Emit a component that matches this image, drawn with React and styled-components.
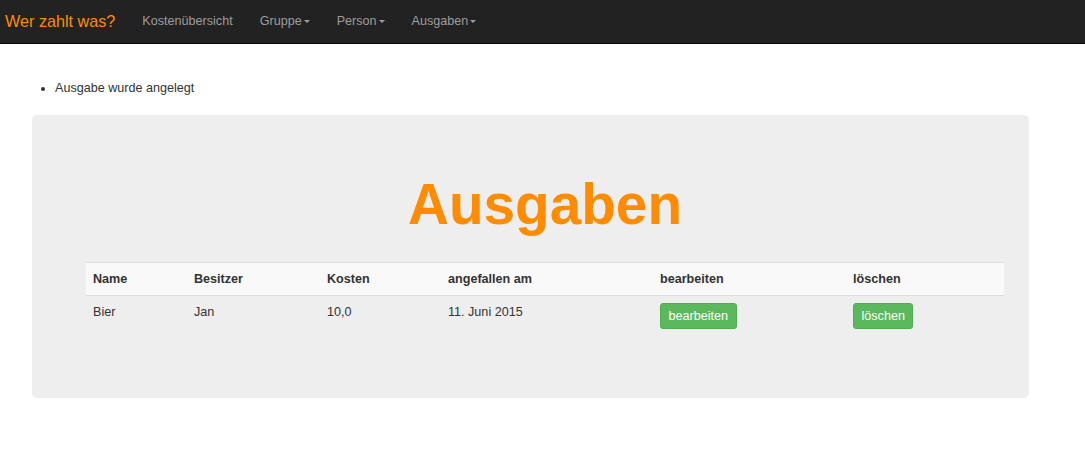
import React from 'react';
import styled, { createGlobalStyle } from 'styled-components';

const GlobalStyle = createGlobalStyle`
    html, body {
        margin: 0;
        padding: 0;
        background: #ffffff;
        font-family: "Liberation Sans", Arial, Helvetica, sans-serif;
        font-size: 12.6px;
        line-height: 18px;
        color: #333333;
    }
`;

const Navbar = styled.nav`
    display: flex;
    align-items: center;
    height: 43px;
    background: #222222;
    border-bottom: 1px solid #080808;
`;

const Brand = styled.a`
    padding: 0 13.5px 0 5px;
    font-size: 16.2px;
    line-height: 43px;
    color: #ff8c00;
    text-decoration: none;
`;

const NavList = styled.ul`
    display: flex;
    margin: 0;
    padding: 0;
    list-style: none;
`;

const NavLink = styled.a`
    display: flex;
    align-items: center;
    padding: 0 13.5px;
    line-height: 43px;
    color: #9d9d9d;
    text-decoration: none;
`;

const Caret = styled.span`
    display: inline-block;
    width: 0;
    height: 0;
    margin-left: 2px;
    border-top: 3.6px solid #9d9d9d;
    border-left: 3.6px solid transparent;
    border-right: 3.6px solid transparent;
`;

const Main = styled.main`
    padding: 0 56px 0 32px;
`;

const Messages = styled.ul`
    margin: 0;
    padding: 35px 0 18px 23px;
`;

const Jumbotron = styled.section`
    background: #eeeeee;
    border-radius: 5px;
    padding: 59px 25px 44px 54px;
`;

const Title = styled.h1`
    margin: 0;
    text-align: center;
    font-size: 56.7px;
    line-height: 62px;
    font-weight: bold;
    color: #ff8c00;
`;

const Table = styled.table`
    width: 100%;
    margin: 26px 0 18px;
    table-layout: fixed;
    border-collapse: collapse;
    border-spacing: 0;
`;

const Th = styled.th`
    box-sizing: border-box;
    width: ${props => props.w}px;
    padding: 7px;
    text-align: left;
    font-weight: bold;
    background: #f9f9f9;
    border-top: 1px solid #dddddd;
    border-bottom: 1px solid #dddddd;
`;

const Td = styled.td`
    padding: 7px;
    vertical-align: top;
`;

const GreenButton = styled.button`
    height: 26px;
    padding: 0 7.5px;
    font-family: inherit;
    font-size: 12.6px;
    color: #ffffff;
    background: #5cb85c;
    border: 1px solid #4cae4c;
    border-radius: 3px;
    cursor: pointer;
`;

const columns = [
    ['Name', 101],
    ['Besitzer', 133],
    ['Kosten', 121],
    ['angefallen am', 212],
    ['bearbeiten', 193],
    ['löschen', 158],
];

function App() {
    return (
        <>
            <GlobalStyle />
            <Navbar>
                <Brand href="#">Wer zahlt was?</Brand>
                <NavList>
                    <li><NavLink href="#">Kostenübersicht</NavLink></li>
                    <li><NavLink href="#">Gruppe<Caret /></NavLink></li>
                    <li><NavLink href="#">Person<Caret /></NavLink></li>
                    <li><NavLink href="#">Ausgaben<Caret /></NavLink></li>
                </NavList>
            </Navbar>

            <Main>
                <Messages>
                    <li>Ausgabe wurde angelegt</li>
                </Messages>

                <Jumbotron>
                    <Title>Ausgaben</Title>
                    <Table>
                        <thead>
                            <tr>
                                {columns.map(([label, w]) => (
                                    <Th key={label} w={w}>{label}</Th>
                                ))}
                            </tr>
                        </thead>
                        <tbody>
                            <tr>
                                <Td>Bier</Td>
                                <Td>Jan</Td>
                                <Td>10,0</Td>
                                <Td>11. Juni 2015</Td>
                                <Td><GreenButton>bearbeiten</GreenButton></Td>
                                <Td><GreenButton>löschen</GreenButton></Td>
                            </tr>
                        </tbody>
                    </Table>
                </Jumbotron>
            </Main>
        </>
    );
}

export default App;
